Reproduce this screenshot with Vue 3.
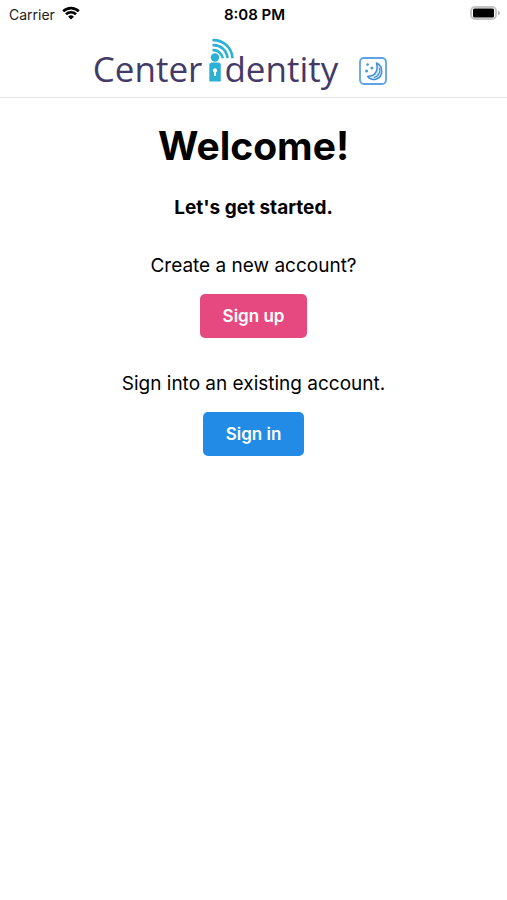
<script setup>
import { ref } from 'vue'

const dark = ref(false)
const actions = [
  { prompt: 'Create a new account?', label: 'Sign up', tone: 'pink' },
  { prompt: 'Sign into an existing account.', label: 'Sign in', tone: 'blue' },
]
</script>

<template>
  <div class="screen">
    <div class="status">
      <div class="carrier">
        <span>Carrier</span>
        <svg class="wifi" viewBox="0 0 18 14" aria-hidden="true">
          <path d="M1.2 5.3A11.2 11.2 0 0 1 16.8 5.3" />
          <path d="M4 8.3A7.2 7.2 0 0 1 14 8.3" />
          <path class="solid" d="M9 13.6 6.1 10.7A4.2 4.2 0 0 1 11.9 10.7Z" />
        </svg>
      </div>
      <span class="time">8:08 PM</span>
      <svg class="battery" viewBox="0 0 30 14" aria-hidden="true">
        <rect x="1" y="1" width="25" height="12" rx="4" fill="#fff" stroke="#c4c4c4" stroke-width="2" />
        <rect x="3" y="2.5" width="21" height="9" rx="1.5" fill="#000" />
        <path d="M28 4.5Q30 5.2 30 7T28 9.5Z" fill="#b5b5b5" />
      </svg>
    </div>

    <header class="header">
      <div class="logo">
        <span>Center</span>
        <svg class="mark" viewBox="0 0 28 46" aria-hidden="true">
          <g fill="none" stroke="#2bb1d6" stroke-width="2.6">
            <path d="M4.5 2.2A19 19 0 0 1 24.5 20.2" />
            <path d="M4.500 7.2A14 14 0 0 1 19.5 20.2" />
            <path d="M4.500 12.2A9.5 9.5 0 0 1 14.8 20.2" />
          </g>
          <circle cx="7" cy="19.5" r="4.2" fill="#2bb1d6" />
          <path d="M1.3 43.5V27Q1.3 24.5 4 24.5H10Q12.8 24.5 12.8 27V43.5Z" fill="#2bb1d6" />
          <path d="M7 30.2A2.2 2.2 0 0 1 8 34.3V38H6V34.3A2.2 2.2 0 0 1 7 30.2Z" fill="#fff" />
        </svg>
        <span>dentity</span>
      </div>
      <button class="theme" type="button" aria-label="Dark mode" :aria-pressed="dark" @click="dark = !dark">
        <svg viewBox="0 0 28 28" aria-hidden="true">
          <rect x="1" y="1" width="26" height="26" rx="4" fill="#fff" stroke="#5ea3e3" stroke-width="1.8" />
          <path d="M17.5 6C24.5 9 24.5 19.500 17.5 22C13.500 23.3 10 21.800 8.7 19.3C16.500 19.5 19.5 13 17.5 6Z" fill="#d5e8f9" stroke="#3f8fda" stroke-width="1.5" stroke-linejoin="round" />
          <path d="M20.5 11C22 15.500 19 19.5 15 20.5" fill="none" stroke="#3f8fda" stroke-width="1.2" />
          <g fill="#4c98df">
            <circle cx="8.6" cy="7.6" r="1.4" />
            <circle cx="12.9" cy="11" r="1.5" />
            <circle cx="7.6" cy="14" r="1.5" />
          </g>
        </svg>
      </button>
    </header>

    <main class="content">
      <h1>Welcome!</h1>
      <h2>Let's get started.</h2>
      <section v-for="a in actions" :key="a.label" class="action">
        <p>{{ a.prompt }}</p>
        <button type="button" class="btn" :class="a.tone">{{ a.label }}</button>
      </section>
    </main>
  </div>
</template>

<style>
body {
  margin: 0;
  background: #fff;
}
</style>

<style scoped>
.screen {
  min-height: 100vh;
  color: #000;
  font-family: Inter, "Liberation Sans", sans-serif;
}
.status {
  display: grid;
  grid-template-columns: 1fr auto 1fr;
  align-items: center;
  height: 28px;
  padding: 0 7px 0 9px;
  font-size: 14px;
}
.carrier {
  display: flex;
  align-items: center;
  gap: 7px;
  color: #222;
}
.wifi {
  width: 18px;
  height: 14px;
  margin-bottom: 2px;
  fill: none;
  stroke: #000;
  stroke-width: 2.6;
}
.wifi .solid {
  fill: #000;
  stroke: none;
}
.time {
  font-size: 15px;
  font-weight: 600;
}
.battery {
  width: 30px;
  height: 14px;
  justify-self: end;
  margin-bottom: 2px;
}
.header {
  display: flex;
  justify-content: center;
  align-items: flex-end;
  gap: 21px;
  height: 69px;
  padding-right: 27px;
  border-bottom: 1px solid #e4e4e4;
}
.logo {
  display: flex;
  align-items: flex-end;
  padding-bottom: 4px;
  color: #433a68;
  font-family: "Open Sans", "Noto Sans", sans-serif;
  font-size: 35px;
  line-height: 48px;
}
.mark {
  width: 28px;
  height: 46px;
  margin: 0 -12px 9px 6px;
}
.theme {
  width: 28px;
  height: 28px;
  margin-bottom: 12px;
  padding: 0;
  border: 0;
  background: none;
  cursor: pointer;
}
.theme svg {
  display: block;
}
.content {
  display: flex;
  flex-direction: column;
  align-items: center;
  padding: 24px 16px;
  text-align: center;
}
h1 {
  margin: 0;
  font-size: 39px;
  line-height: 48px;
  font-weight: 700;
}
h2 {
  margin: 26px 0 0;
  font-size: 19px;
  line-height: 24px;
  font-weight: 700;
}
.action {
  padding-top: 34px;
}
.action p {
  margin: 0 0 16px;
  font-size: 19px;
  line-height: 24px;
}
.btn {
  height: 44px;
  padding: 0 23px;
  border: 0;
  border-radius: 5px;
  color: #fff;
  font: inherit;
  font-size: 17px;
  font-weight: 600;
  cursor: pointer;
}
.pink {
  background: #e64980;
}
.blue {
  background: #228be6;
}
</style>
